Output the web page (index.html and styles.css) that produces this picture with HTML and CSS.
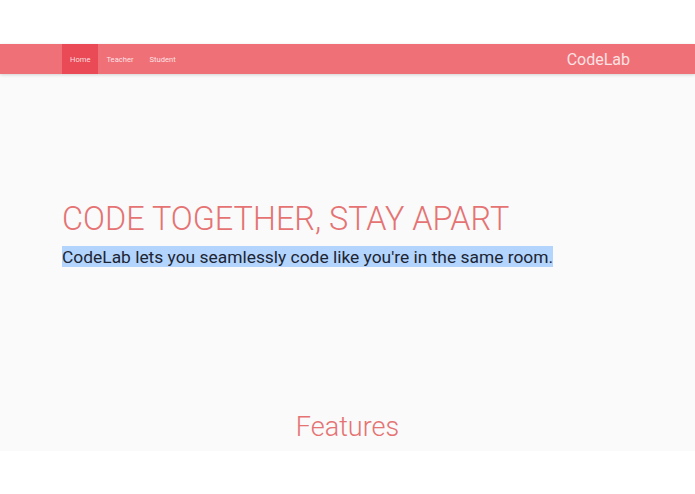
FILE: index.html
```html
<!DOCTYPE html>
<html lang="en">
<head>
<meta charset="utf-8">
<title>CodeLab</title>
<link rel="stylesheet" href="styles.css">
</head>
<body>
<div class="top-space"></div>
<nav class="navbar">
  <div class="nav-inner">
    <ul class="nav-links">
      <li class="nav-item active">Home</li>
      <li class="nav-item">Teacher</li>
      <li class="nav-item">Student</li>
    </ul>
    <div class="brand">CodeLab</div>
  </div>
</nav>
<main class="main">
  <section class="hero">
    <h1 class="hero-title">CODE TOGETHER, STAY APART</h1>
    <p class="hero-sub"><span class="selected">CodeLab lets you seamlessly code like you're in the same room.</span></p>
  </section>
  <h2 class="features-title">Features</h2>
</main>
</body>
</html>
```
FILE: styles.css
```css
html, body {
  margin: 0;
  padding: 0;
  background: #ffffff;
  font-family: Roboto, "Liberation Sans", sans-serif;
}
.top-space {
  height: 44px;
}
.navbar {
  height: 30px;
  background: #ef7077;
  box-shadow: 0 1px 3px rgba(0,0,0,0.16);
  position: relative;
  z-index: 1;
}
.nav-inner {
  height: 100%;
  padding: 0 62px;
  display: flex;
  align-items: center;
  justify-content: space-between;
}
.nav-links {
  list-style: none;
  margin: 0;
  padding: 0;
  display: flex;
  height: 100%;
}
.nav-item {
  height: 100%;
  display: flex;
  align-items: center;
  padding: 0 8px;
  font-size: 7.6px;
  color: rgba(255,255,255,0.82);
}
.nav-item.active {
  background: #e94a55;
}
.brand {
  font-size: 16px;
  color: #fde2e3;
  padding-right: 3px;
}
.main {
  background: #fafafa;
  padding: 126px 62px 7px;
}
.hero-title {
  margin: 0;
  font-size: 32.4px;
  line-height: 38px;
  font-weight: 300;
  color: #e57373;
}
.hero-sub {
  margin: 8px 0 0;
  font-size: 17.4px;
  line-height: 21px;
  color: #1d2533;
}
.selected {
  background: #b3d4fc;
  padding: 0.5px 0;
}
.features-title {
  margin: 143px 0 0;
  text-align: center;
  font-size: 27px;
  line-height: 34px;
  font-weight: 300;
  color: #e57373;
}
```
